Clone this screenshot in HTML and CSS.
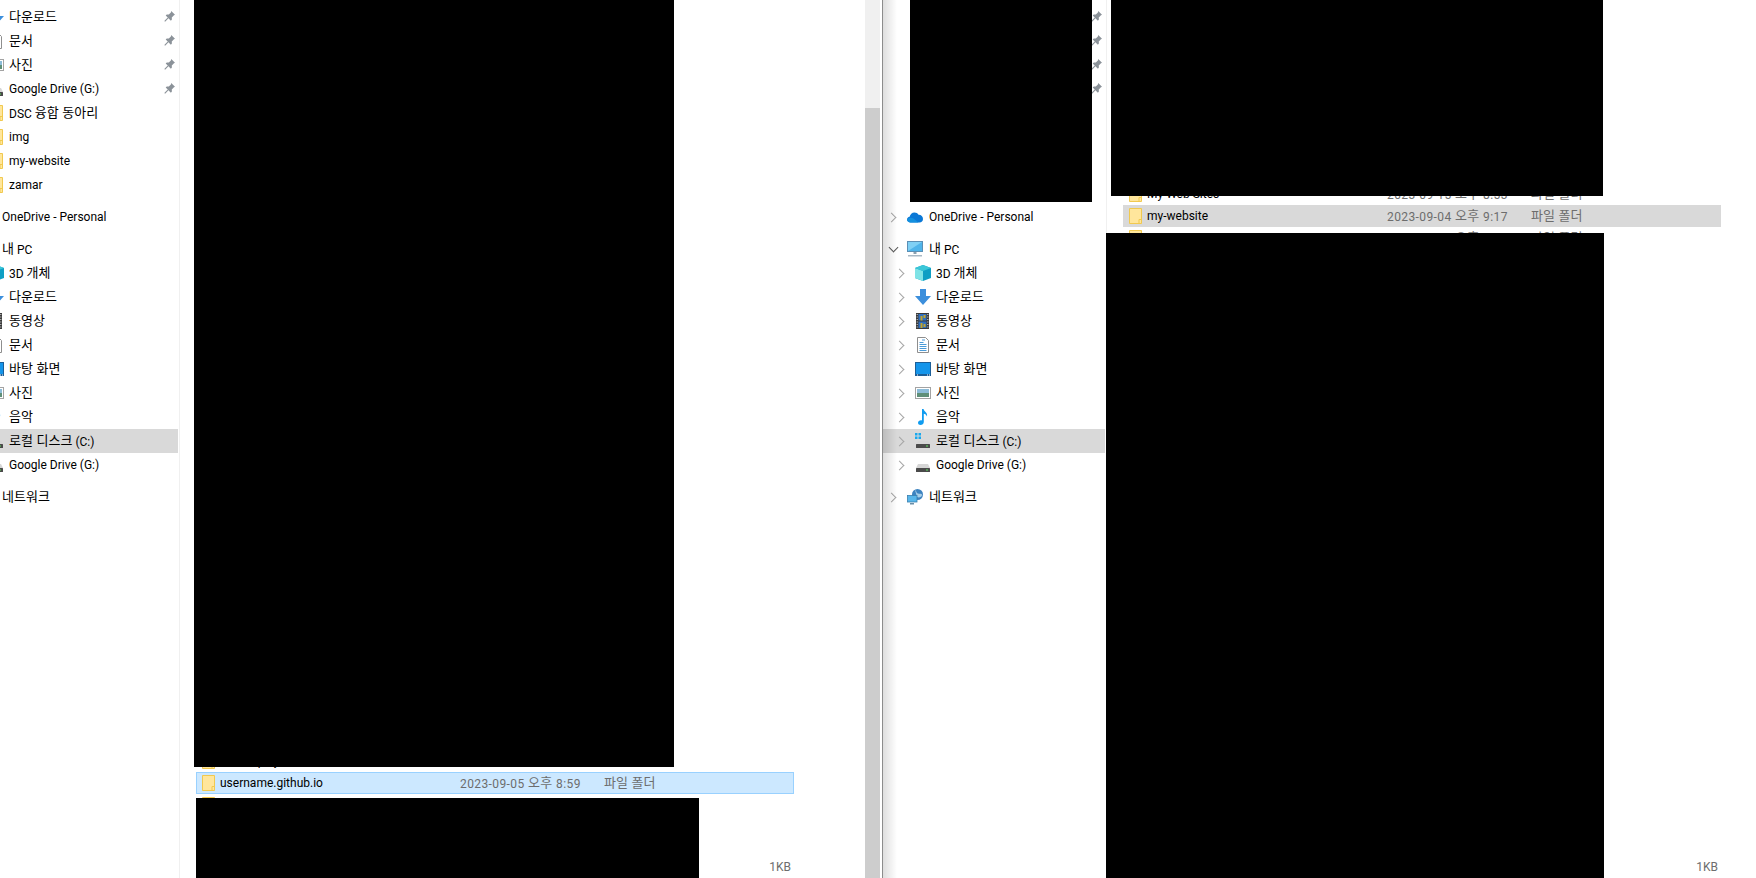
FILE: index.html
```html
<!DOCTYPE html>
<html lang="ko">

<head>
    <meta charset="UTF-8">
    <title>파일 탐색기</title>
    <link rel="stylesheet" href="styles.css">
</head>

<body>
    <svg class="defs" width="0" height="0">
        <symbol id="i-pin" viewBox="0 0 16 16">
            <path d="M10.500 0L16 5.500l-1.500 .8-3.200 3.200 .2 3-1.500 1.500L2.500 6.500 4 5l3 .2L10 2z" fill="#8b9299"/>
            <path d="M6 10l-5 5" stroke="#8b9299" stroke-width="1.600"/>
        </symbol>
        <symbol id="i-folder" viewBox="0 0 16 16">
            <path d="M.5 .5h12v15H.5z" fill="#ffe69c" stroke="#f1c94f"/>
            <path d="M10 15.500v-4h2.500" fill="none" stroke="#f1c94f"/>
        </symbol>
        <symbol id="i-cloud" viewBox="0 0 16 16">
            <path d="M3.500 13.500C1.500 13.500 0 12.300 0 10.600c0-1.500 1.100-2.600 2.600-2.800C3.100 5.500 5 3.500 7.500 3.500c1.700 0 3.200 .9 4 2.300 2.500-.2 4.500 1.700 4.500 4.100 0 2.100-1.500 3.600-3.500 3.600z" fill="#0a78d6"/>
            <path d="M3.500 13.500C1.500 13.500 0 12.300 0 10.600c1.500-2.200 4.500-2.500 6.500-1l5 4z" fill="#1490df"/>
        </symbol>
        <symbol id="i-pc" viewBox="0 0 16 16">
            <rect x=".5" y=".5" width="15" height="10" fill="#7fd0f5" stroke="#5b8fb5"/>
            <path d="M1 10L15 1v9z" fill="#4fb4ea"/>
            <path d="M6.500 11h3v2h-3z" fill="#8aa0b0"/>
            <path d="M1 14h14v1.500H1z" fill="#a9b8c4"/>
        </symbol>
        <symbol id="i-cube" viewBox="0 0 16 16">
            <path d="M8 0l8 3v10l-8 3-8-3V3z" fill="#0f9fc4"/>
            <path d="M0 3l8 3v10l-8-3z" fill="#7fe3e6"/>
            <path d="M8 0l8 3-8 3-8-3z" fill="#3cc7d8"/>
        </symbol>
        <symbol id="i-down" viewBox="0 0 16 16">
            <path d="M5 0h6v7h5l-8 9-8-9h5z" fill="#3c8fdc"/>
        </symbol>
        <symbol id="i-film" viewBox="0 0 16 16">
            <rect x="1" y="0" width="13" height="16" fill="#3a3a3a"/>
            <rect x="3.500" y="1" width="8" height="6.500" fill="#2f6fc0"/>
            <rect x="3.500" y="8.500" width="8" height="6.500" fill="#2f6fc0"/>
            <path d="M5.500 3h2v4.500h-2zM8.500 2h2v3h-2zM5.500 10h2v5h-2zM8.500 11h2v3h-2z" fill="#c2a42c"/>
            <path d="M2.200 1v14M12.800 1v14" stroke="#ddd" stroke-dasharray="1 1.500"/>
        </symbol>
        <symbol id="i-doc" viewBox="0 0 16 16">
            <path d="M2.500 .5h8l3 3v12h-11z" fill="#fff" stroke="#8e8e8e"/>
            <path d="M7 3h3M4.500 5.500h4M4.500 7.500h7M4.500 9.500h7M4.500 11.500h7M4.500 13.500h7" stroke="#4a9bd8"/>
        </symbol>
        <symbol id="i-desk" viewBox="0 0 16 16">
            <rect x="0" y="1" width="16" height="14" fill="#1c5f98"/>
            <rect x="1" y="2" width="14" height="11" fill="#1595ea"/>
            <path d="M2 14h1M12 14h1M14 14h1" stroke="#fff"/>
        </symbol>
        <symbol id="i-pic" viewBox="0 0 16 16">
            <rect x=".5" y="2.500" width="15" height="11" fill="#fff" stroke="#a3a3a3"/>
            <rect x="2" y="4" width="12" height="4" fill="#8cbcd8"/>
            <rect x="2" y="8" width="12" height="4" fill="#5f8f78"/>
        </symbol>
        <symbol id="i-music" viewBox="0 0 16 16">
            <path d="M7 0h1.600c.3 2.500 4.400 3.600 3.400 7.500-.5-1.600-2-2.600-3.200-2.800V13c0 1.700-1.600 3-3.400 3C4.200 16 3 15.200 3 13.800c0-1.500 1.500-2.600 3-2.600 .4 0 .7 0 1 .2z" fill="#0f9cf0"/>
        </symbol>
        <symbol id="i-drive" viewBox="0 0 16 16">
            <path d="M3 7h10l2 4H1z" fill="#d6d6d6"/>
            <rect x="1" y="11" width="14" height="4" rx=".5" fill="#4a4a4a"/>
            <rect x="11" y="12.500" width="2" height="1" fill="#5fe05f"/>
        </symbol>
        <symbol id="i-win" viewBox="0 0 16 16">
            <path d="M0 0h2.500v2.500H0zM3.500 0H6v2.500H3.500zM0 3.500h2.500V6H0zM3.500 3.500H6V6H3.500z" fill="#18a8ee"/>
            <path d="M3 8h10l2 3H1z" fill="#d6d6d6"/>
            <rect x="1" y="11" width="14" height="4" rx=".5" fill="#4a4a4a"/>
            <rect x="11" y="12.500" width="2" height="1" fill="#5fe05f"/>
        </symbol>
        <symbol id="i-net" viewBox="0 0 16 16">
            <circle cx="10.500" cy="5.500" r="5.500" fill="#3d83c0"/>
            <path d="M8 1c2 1 1 3 3 3.500s4-.5 4 1.500-3 3-5 2z" fill="#a8cfe8"/>
            <rect x=".5" y="6.500" width="9.500" height="6.500" fill="#58b6ea" stroke="#3a7fb0" stroke-width=".8"/>
            <path d="M3 14h4v1.500H3z" fill="#6a8fa8"/>
        </symbol>
    </svg>

    <div class="desktop">
        <!-- 왼쪽 창 -->
        <div class="window window-left">
            <div class="nav">
                <div class="nav-row sub"><span class="chev"></span><svg class="ico"><use href="#i-down"/></svg><span class="ko">다운로드</span><svg class="pin"><use href="#i-pin"/></svg></div>
                <div class="nav-row sub"><span class="chev"></span><svg class="ico"><use href="#i-doc"/></svg><span class="ko">문서</span><svg class="pin"><use href="#i-pin"/></svg></div>
                <div class="nav-row sub"><span class="chev"></span><svg class="ico"><use href="#i-pic"/></svg><span class="ko">사진</span><svg class="pin"><use href="#i-pin"/></svg></div>
                <div class="nav-row sub"><span class="chev"></span><svg class="ico"><use href="#i-drive"/></svg><span>Google Drive (G:)</span><svg class="pin"><use href="#i-pin"/></svg></div>
                <div class="nav-row sub"><span class="chev"></span><svg class="ico shift"><use href="#i-folder"/></svg><span>DSC <span class="ko">융합 동아리</span></span></div>
                <div class="nav-row sub"><span class="chev"></span><svg class="ico shift"><use href="#i-folder"/></svg><span>img</span></div>
                <div class="nav-row sub"><span class="chev"></span><svg class="ico shift"><use href="#i-folder"/></svg><span>my-website</span></div>
                <div class="nav-row sub"><span class="chev"></span><svg class="ico shift"><use href="#i-folder"/></svg><span>zamar</span></div>

                <div class="nav-group">
                    <div class="nav-row top"><span class="chev right"></span><svg class="ico"><use href="#i-cloud"/></svg><span>OneDrive - Personal</span></div>
                </div>

                <div class="nav-group">
                    <div class="nav-row top"><span class="chev open"></span><svg class="ico"><use href="#i-pc"/></svg><span><span class="ko">내</span> PC</span></div>
                    <div class="nav-row sub"><span class="chev right"></span><svg class="ico"><use href="#i-cube"/></svg><span>3D <span class="ko">개체</span></span></div>
                    <div class="nav-row sub"><span class="chev right"></span><svg class="ico"><use href="#i-down"/></svg><span class="ko">다운로드</span></div>
                    <div class="nav-row sub"><span class="chev right"></span><svg class="ico"><use href="#i-film"/></svg><span class="ko">동영상</span></div>
                    <div class="nav-row sub"><span class="chev right"></span><svg class="ico"><use href="#i-doc"/></svg><span class="ko">문서</span></div>
                    <div class="nav-row sub"><span class="chev right"></span><svg class="ico"><use href="#i-desk"/></svg><span class="ko">바탕 화면</span></div>
                    <div class="nav-row sub"><span class="chev right"></span><svg class="ico"><use href="#i-pic"/></svg><span class="ko">사진</span></div>
                    <div class="nav-row sub"><span class="chev right"></span><svg class="ico"><use href="#i-music"/></svg><span class="ko">음악</span></div>
                    <div class="nav-row sub selected"><span class="chev right"></span><svg class="ico"><use href="#i-win"/></svg><span><span class="ko">로컬 디스크</span> (C:)</span></div>
                    <div class="nav-row sub"><span class="chev right"></span><svg class="ico"><use href="#i-drive"/></svg><span>Google Drive (G:)</span></div>
                </div>

                <div class="nav-group">
                    <div class="nav-row top"><span class="chev right"></span><svg class="ico"><use href="#i-net"/></svg><span class="ko">네트워크</span></div>
                </div>
            </div>

            <div class="files files-left">
                <div class="file-row"><svg class="folder"><use href="#i-folder"/></svg><span class="name">dotnet-play</span><span class="date">2023-09-05 <span class="ko">오후</span> 8:40</span><span class="kind ko">파일 폴더</span></div>
                <div class="file-row active"><svg class="folder"><use href="#i-folder"/></svg><span class="name">username.github.io</span><span class="date">2023-09-05 <span class="ko">오후</span> 8:59</span><span class="kind ko">파일 폴더</span></div>
                <div class="file-row"><svg class="folder"><use href="#i-folder"/></svg></div>
                <div class="file-size">1KB</div>
            </div>

            <div class="scrollbar"><div class="thumb"></div></div>

            <div class="mask mask-a"></div>
            <div class="mask mask-b"></div>
        </div>

        <!-- 오른쪽 창 -->
        <div class="window window-right">
            <div class="nav">
                <div class="nav-row sub"><span class="chev"></span><svg class="ico"><use href="#i-down"/></svg><svg class="pin"><use href="#i-pin"/></svg></div>
                <div class="nav-row sub"><span class="chev"></span><svg class="ico"><use href="#i-doc"/></svg><svg class="pin"><use href="#i-pin"/></svg></div>
                <div class="nav-row sub"><span class="chev"></span><svg class="ico"><use href="#i-pic"/></svg><svg class="pin"><use href="#i-pin"/></svg></div>
                <div class="nav-row sub"><span class="chev"></span><svg class="ico"><use href="#i-drive"/></svg><svg class="pin"><use href="#i-pin"/></svg></div>
                <div class="nav-row sub"></div>
                <div class="nav-row sub"></div>
                <div class="nav-row sub"></div>
                <div class="nav-row sub"></div>

                <div class="nav-group">
                    <div class="nav-row top"><span class="chev right"></span><svg class="ico"><use href="#i-cloud"/></svg><span>OneDrive - Personal</span></div>
                </div>

                <div class="nav-group">
                    <div class="nav-row top"><span class="chev open"></span><svg class="ico"><use href="#i-pc"/></svg><span><span class="ko">내</span> PC</span></div>
                    <div class="nav-row sub"><span class="chev right"></span><svg class="ico"><use href="#i-cube"/></svg><span>3D <span class="ko">개체</span></span></div>
                    <div class="nav-row sub"><span class="chev right"></span><svg class="ico"><use href="#i-down"/></svg><span class="ko">다운로드</span></div>
                    <div class="nav-row sub"><span class="chev right"></span><svg class="ico"><use href="#i-film"/></svg><span class="ko">동영상</span></div>
                    <div class="nav-row sub"><span class="chev right"></span><svg class="ico"><use href="#i-doc"/></svg><span class="ko">문서</span></div>
                    <div class="nav-row sub"><span class="chev right"></span><svg class="ico"><use href="#i-desk"/></svg><span class="ko">바탕 화면</span></div>
                    <div class="nav-row sub"><span class="chev right"></span><svg class="ico"><use href="#i-pic"/></svg><span class="ko">사진</span></div>
                    <div class="nav-row sub"><span class="chev right"></span><svg class="ico"><use href="#i-music"/></svg><span class="ko">음악</span></div>
                    <div class="nav-row sub selected"><span class="chev right"></span><svg class="ico"><use href="#i-win"/></svg><span><span class="ko">로컬 디스크</span> (C:)</span></div>
                    <div class="nav-row sub"><span class="chev right"></span><svg class="ico"><use href="#i-drive"/></svg><span>Google Drive (G:)</span></div>
                </div>

                <div class="nav-group">
                    <div class="nav-row top"><span class="chev right"></span><svg class="ico"><use href="#i-net"/></svg><span class="ko">네트워크</span></div>
                </div>
            </div>

            <div class="files files-right">
                <div class="file-row"><svg class="folder"><use href="#i-folder"/></svg><span class="name">My Web Sites</span><span class="date">2023-09-15 <span class="ko">오후</span> 8:53</span><span class="kind ko">파일 폴더</span></div>
                <div class="file-row hover"><svg class="folder"><use href="#i-folder"/></svg><span class="name">my-website</span><span class="date">2023-09-04 <span class="ko">오후</span> 9:17</span><span class="kind ko">파일 폴더</span></div>
                <div class="file-row"><svg class="folder"><use href="#i-folder"/></svg><span class="date">2023-07-16 <span class="ko">오후</span> 3:08</span><span class="kind ko">파일 폴더</span></div>
                <div class="file-size">1KB</div>
            </div>

            <div class="mask mask-c"></div>
            <div class="mask mask-d"></div>
            <div class="mask mask-e"></div>
        </div>
    </div>
</body>

</html>
```

FILE: styles.css
```css
* {
    margin: 0;
    padding: 0;
    box-sizing: border-box;
}

html,
body {
    height: 100%;
    overflow: hidden;
    background-color: white;
}

body {
    font-family: Roboto, "Noto Sans CJK KR", sans-serif;
    font-size: 12px;
    color: black;
}

/* 한글은 라틴 글자보다 조금 크게 */
.ko {
    font-family: "Noto Sans CJK KR", sans-serif;
    font-size: 13px;
    line-height: 1;
    vertical-align: 1px;
}

.nav-row > .ko,
.file-row > .ko {
    margin-bottom: 2px;
}

.defs {
    position: absolute;
}

.desktop {
    display: flex;
    height: 878px;
    overflow: hidden;
}

.window {
    position: relative;
    display: flex;
    flex: none;
    height: 878px;
    overflow: hidden;
}

.window-left {
    width: 927px;
    margin-left: -45px;
}

.window-right {
    width: 874px;
    border-left: 1px solid #8c8c8c;
}

/* 창 왼쪽 그림자 */
.window-right::before {
    content: "";
    position: absolute;
    left: 0;
    top: 0;
    bottom: 0;
    width: 14px;
    background: linear-gradient(to right, rgba(0, 0, 0, 0.13), rgba(0, 0, 0, 0));
    z-index: 1;
}

.nav {
    flex: none;
    width: 225px;
    padding-top: 5px;
    border-right: 1px solid #f0f0f0;
}

.window-right .nav {
    width: 224px;
}

.nav-group {
    margin-top: 8px;
}

.nav-row {
    display: flex;
    align-items: center;
    width: 223px;
    height: 24px;
    padding-bottom: 1px;
    white-space: nowrap;
}

.window-right .nav-row {
    width: 222px;
}

.nav-row.top {
    padding-left: 8px;
}

.nav-row.sub {
    padding-left: 16px;
}

.window-right .nav-row.top {
    padding-left: 7px;
}

.window-right .nav-row.sub {
    padding-left: 15px;
}

.nav-row.top .ico {
    margin-right: 6px;
}

.nav-row.sub .ico {
    margin-right: 5px;
}

.nav-row.sub .ico.shift {
    margin-left: 2px;
    margin-right: 3px;
}

.nav-row.selected {
    background-color: #d9d9d9;
}

.chev {
    flex: none;
    width: 8px;
    height: 8px;
    margin-right: 9px;
    position: relative;
}

.chev.right::before,
.chev.open::before {
    content: "";
    position: absolute;
    left: -2px;
    top: 1px;
    width: 6px;
    height: 6px;
    border-top: 1.5px solid #a6a6a6;
    border-right: 1.5px solid #a6a6a6;
    transform: rotate(45deg);
}

.chev.open::before {
    left: 0;
    top: -1px;
    width: 6px;
    height: 6px;
    border-color: #595959;
    transform: rotate(135deg);
}

.ico {
    flex: none;
    width: 16px;
    height: 16px;
}

.pin {
    flex: none;
    width: 11px;
    height: 11px;
    margin-left: auto;
    margin-right: 3px;
}

.files {
    flex: 1;
    min-width: 0;
    display: flex;
    flex-direction: column;
    padding-left: 16px;
}

.files-left {
    padding-top: 750px;
}

.files-right {
    padding-top: 183px;
}

.file-row {
    display: flex;
    align-items: center;
    flex: none;
    width: 598px;
    height: 22px;
    border: 1px solid transparent;
    padding-left: 5px;
    padding-bottom: 1px;
    white-space: nowrap;
}

.file-row.active {
    background-color: #cce8ff;
    border-color: #99d1ff;
}

.file-row.hover {
    background-color: #d9d9d9;
}

.folder {
    flex: none;
    width: 16px;
    height: 16px;
    margin-right: 2px;
}

.name {
    width: 240px;
    flex: none;
}

.date {
    width: 144px;
    flex: none;
    color: #6d6d6d;
    letter-spacing: 0.4px;
}

.file-row > .folder + .date {
    margin-left: 240px;
}

.kind {
    color: #6d6d6d;
}

.file-size {
    margin-top: auto;
    width: 598px;
    height: 22px;
    line-height: 22px;
    padding-right: 3px;
    text-align: right;
    color: #6d6d6d;
}

.scrollbar {
    flex: none;
    width: 15px;
    margin-right: 2px;
    padding-top: 108px;
    background-color: #f0f0f0;
}

.thumb {
    height: 100%;
    background-color: #cdcdcd;
}

/* 가린 영역 */
.mask {
    position: absolute;
    background-color: black;
    z-index: 2;
}

.mask-a {
    left: 239px;
    top: 0;
    width: 480px;
    height: 767px;
}

.mask-b {
    left: 241px;
    top: 798px;
    width: 503px;
    height: 80px;
}

.mask-c {
    left: 27px;
    top: 0;
    width: 182px;
    height: 202px;
}

.mask-d {
    left: 228px;
    top: 0;
    width: 492px;
    height: 196px;
}

.mask-e {
    left: 223px;
    top: 233px;
    width: 498px;
    height: 645px;
}
```
